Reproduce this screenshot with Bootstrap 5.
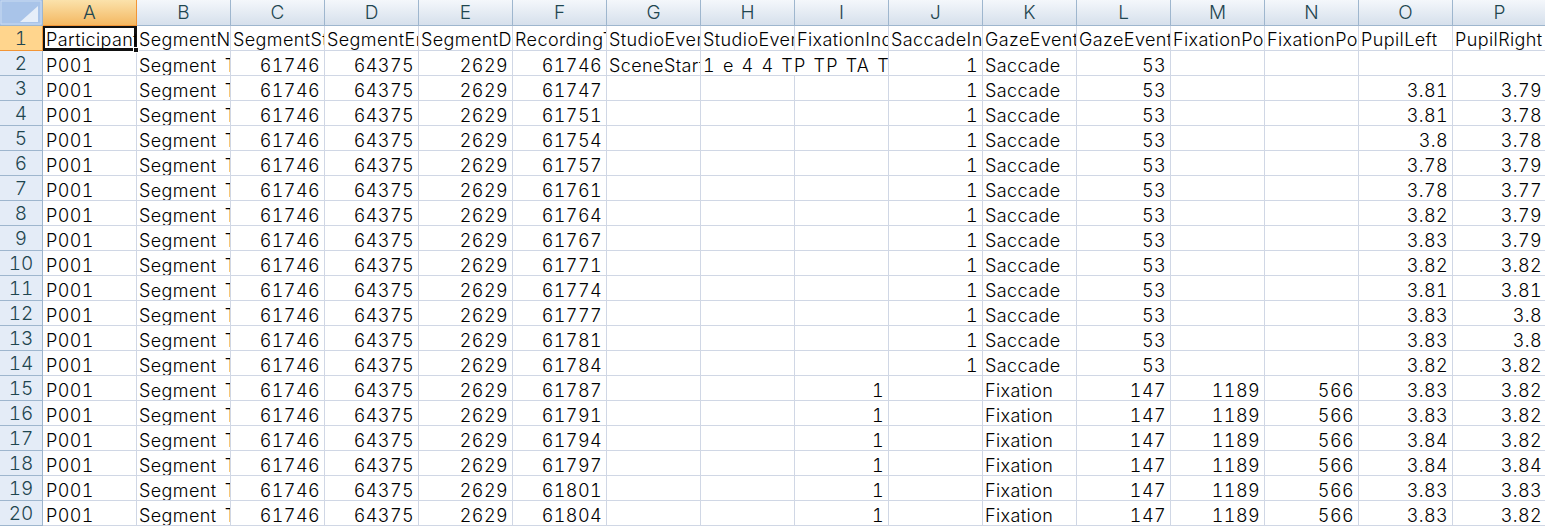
<!DOCTYPE html>
<html lang="en">
<head>
  <meta charset="UTF-8" />
  <title>Gaze data sheet</title>
  <link href="https://cdn.jsdelivr.net/npm/bootstrap@5.3.0/dist/css/bootstrap.min.css" rel="stylesheet" />
  <style>
    html, body { margin: 0; height: 100%; overflow: hidden; background: #fff; }
    .sheet-wrap { width: 1545px; height: 528px; overflow: hidden; }
    .sheet {
      width: 1547px;
      table-layout: fixed;
      border-collapse: separate;
      border-spacing: 0;
      font-family: "Inter", "Liberation Sans", Arial, sans-serif;
      font-size: 18px;
      font-weight: 300;
      font-variant-numeric: tabular-nums;
      letter-spacing: .4px;
      color: #000;
    }
    .sheet th, .sheet td {
      height: 25px;
      padding: 0 0 0 2px;
      line-height: 18px;
      font-weight: 300;
      white-space: nowrap;
      overflow: hidden;
      vertical-align: bottom;
      border-right: 1px solid #d0d7e5;
      border-bottom: 1px solid #d0d7e5;
    }
    .sheet .title-row td { line-height: 20px; }
    .sheet td.first-col { padding-left: 3px; }
    .sheet td.num { text-align: right; padding-right: 4px; }
    .sheet th.col-head {
      height: 26px;
      padding: 0;
      text-align: center;
      font-size: 19px;
      line-height: 24px;
      letter-spacing: 0;
      color: #1f4650;
      border-right-color: #9eb6ce;
      border-bottom-color: #9eb6ce;
      background: linear-gradient(#f4f7fb, #d6e0ec);
    }
    .sheet th.row-head {
      text-align: center;
      font-size: 19px;
      line-height: 23px;
      letter-spacing: 0;
      color: #1f4650;
      padding: 0;
      background: #e4ecf7;
      border-right-color: #9eb6ce;
      border-bottom-color: #9eb6ce;
    }
    .sheet th.col-head.on { background: linear-gradient(#fbe2ab, #f4b862); border-right-color: #f29536; border-bottom-color: #f29536; }
    .sheet th.row-head.on { background: #ffd58d; border-right-color: #f29536; border-bottom-color: #f29536; }
    .sheet th.corner { padding: 0; background: #a9c4e9; border-right-color: #9eb6ce; border-bottom-color: #9eb6ce; }
    .corner svg { display: block; }
    .sheet td.active-cell { position: relative; overflow: visible; box-shadow: inset 0 0 0 2px #111; border-right-color: #111; border-bottom-color: #111; }
    .active-clip { display: block; overflow: hidden; }
    .wide-words { word-spacing: 3px; }
    .event-data { word-spacing: 1px; letter-spacing: 1.2px; }
    .fill-handle {
      position: absolute;
      right: -3px;
      bottom: -3px;
      width: 6px;
      height: 6px;
      background: #111;
      border: 1px solid #fff;
      z-index: 2;
    }
  </style>
</head>
<body>
  <div class="sheet-wrap">
    <table class="sheet" id="sheet">
      <colgroup id="cols"></colgroup>
      <thead><tr id="headRow"></tr></thead>
      <tbody id="rows"></tbody>
    </table>
  </div>

  <script src="https://cdn.jsdelivr.net/npm/bootstrap@5.3.0/dist/js/bootstrap.bundle.min.js"></script>
  <script>
    const letters = "ABCDEFGHIJKLMNOP".split("");
    const titles = ["Participant", "SegmentName", "SegmentStart", "SegmentEnd", "SegmentDuration", "RecordingTimestamp",
      "StudioEvent", "StudioEventData", "FixationIndex", "SaccadeIndex", "GazeEventType", "GazeEventDuration",
      "FixationPointX", "FixationPointY", "PupilLeft", "PupilRight"];
    const times = [61746, 61747, 61751, 61754, 61757, 61761, 61764, 61767, 61771, 61774, 61777, 61781, 61784, 61787, 61791, 61794, 61797, 61801, 61804];
    const left = ["", 3.81, 3.81, 3.8, 3.78, 3.78, 3.82, 3.83, 3.82, 3.81, 3.83, 3.83, 3.82, 3.83, 3.83, 3.84, 3.84, 3.83, 3.83];
    const right = ["", 3.79, 3.78, 3.78, 3.79, 3.77, 3.79, 3.79, 3.82, 3.81, 3.8, 3.8, 3.82, 3.82, 3.82, 3.82, 3.84, 3.83, 3.82];

    let cols = '<col style="width:43px">';
    let head = '<th class="corner"><svg width="42" height="25"><path d="M1 1h40v23H1z" fill="#a9c4e9" stroke="#c9dbf2"/><path d="M38 6v16H20z" fill="#e6eef9"/></svg></th>';
    letters.forEach((l, i) => {
      cols += '<col style="width:94px">';
      head += `<th class="col-head${i === 0 ? " on" : ""}">${l}</th>`;
    });
    document.getElementById("cols").innerHTML = cols;
    document.getElementById("headRow").innerHTML = head;

    // first row holds the titles, they get cut by the cell edge
    let html = '<tr class="title-row"><th class="row-head on">1</th>';
    titles.forEach((t, i) => {
      html += i === 0
        ? `<td class="active-cell first-col"><span class="active-clip">${t}</span><span class="fill-handle"></span></td>`
        : `<td>${t}</td>`;
    });
    html += "</tr>";

    times.forEach((t, i) => {
      const sacc = i < 13;
      html += `<tr><th class="row-head">${i + 2}</th><td class="first-col">P001</td><td class="wide-words">Segment T</td>`;
      html += `<td class="num">61746</td><td class="num">64375</td><td class="num">2629</td><td class="num">${t}</td>`;
      if (i === 0) {
        html += '<td>SceneStart</td><td colspan="2" class="event-data">1 e 4 4 TP TP TA TA</td>';
      } else {
        html += `<td></td><td></td><td class="num">${sacc ? "" : 1}</td>`;
      }
      html += `<td class="num">${sacc ? 1 : ""}</td>`;
      html += `<td>${sacc ? "Saccade" : "Fixation"}</td><td class="num">${sacc ? 53 : 147}</td>`;
      html += `<td class="num">${sacc ? "" : 1189}</td><td class="num">${sacc ? "" : 566}</td>`;
      html += `<td class="num">${left[i]}</td><td class="num">${right[i]}</td></tr>`;
    });
    document.getElementById("rows").innerHTML = html;
  </script>
</body>
</html>
